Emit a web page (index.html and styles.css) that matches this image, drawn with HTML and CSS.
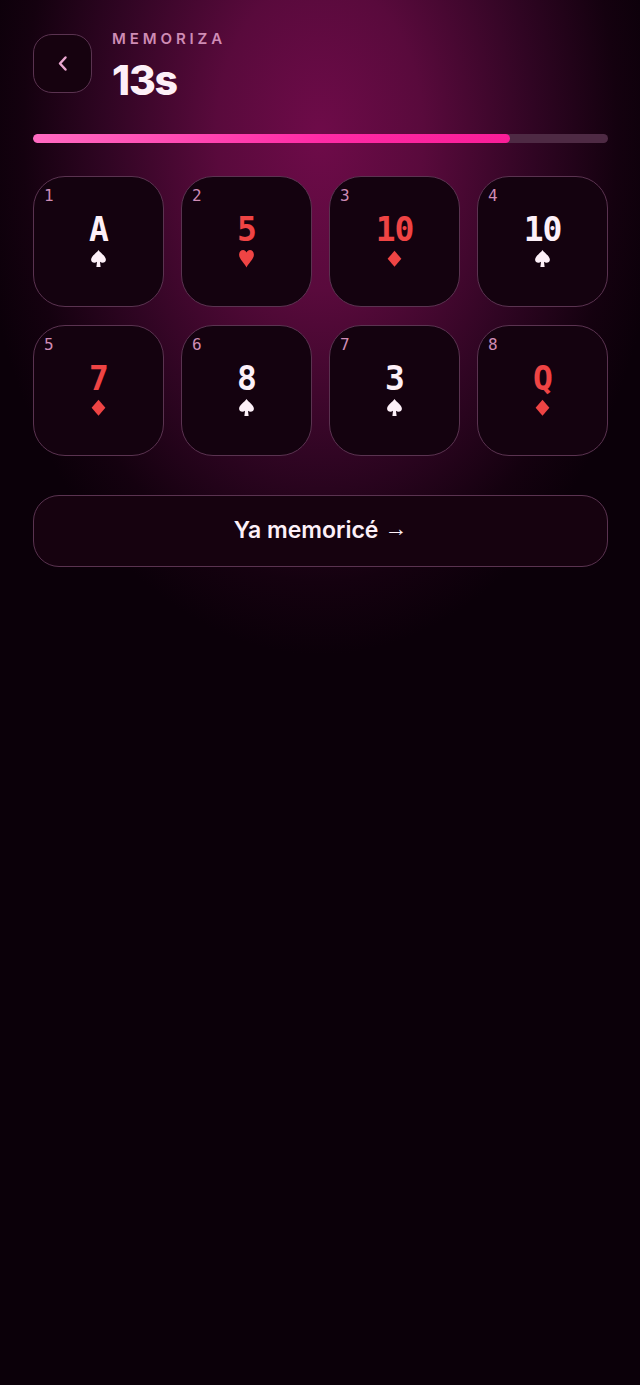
FILE: index.html
```html
<!DOCTYPE html>
<html lang="es">
<head>
    <meta charset="UTF-8">
    <meta name="viewport" content="width=device-width, initial-scale=1.0">
    <title>Memoriza</title>
    <link rel="stylesheet" href="styles.css">
</head>
<body>
    <svg class="defs" width="0" height="0" aria-hidden="true">
        <symbol id="spade" viewBox="0 0 14 17"><path d="M7 0C8.500 2.600 14 5.600 14 9.200c0 2.600-3.200 3.700-5.600 2l.6 4.800H5l.6-4.800c-2.400 1.700-5.600.6-5.600-2C0 5.600 5.500 2.600 7 0z"/></symbol>
        <symbol id="heart" viewBox="0 0 14 17"><path d="M7 16.500C5.500 12.500 0 8.800 0 4.400 0 1.600 1.800 0 3.800 0 5.200 0 6.400.8 7 2.400 7.600.8 8.800 0 10.200 0 12.200 0 14 1.600 14 4.400 14 8.800 8.500 12.500 7 16.500z"/></symbol>
        <symbol id="diamond" viewBox="0 0 14 17"><path d="M7 .8 13.500 8.300 7 15.800.5 8.300z"/></symbol>
    </svg>

    <main class="screen">
        <header class="top">
            <button class="back" type="button" aria-label="Volver">
                <svg width="24" height="24" viewBox="0 0 24 24" fill="none" stroke="currentColor" stroke-width="2.500" stroke-linecap="round" stroke-linejoin="round"><path d="M14.500 5.500 9 11.500l5.500 6"/></svg>
            </button>
            <div class="heading">
                <div class="label">MEMORIZA</div>
                <div class="time">13s</div>
            </div>
        </header>

        <div class="progress"><div class="progress-fill" style="width: 83%"></div></div>

        <section class="cards">
            <div class="card"><span class="num">1</span><span class="rank">A</span><svg class="suit"><use href="#spade"/></svg></div>
            <div class="card red"><span class="num">2</span><span class="rank">5</span><svg class="suit"><use href="#heart"/></svg></div>
            <div class="card red"><span class="num">3</span><span class="rank">10</span><svg class="suit"><use href="#diamond"/></svg></div>
            <div class="card"><span class="num">4</span><span class="rank">10</span><svg class="suit"><use href="#spade"/></svg></div>
            <div class="card red"><span class="num">5</span><span class="rank">7</span><svg class="suit"><use href="#diamond"/></svg></div>
            <div class="card"><span class="num">6</span><span class="rank">8</span><svg class="suit"><use href="#spade"/></svg></div>
            <div class="card"><span class="num">7</span><span class="rank">3</span><svg class="suit"><use href="#spade"/></svg></div>
            <div class="card red"><span class="num">8</span><span class="rank">Q</span><svg class="suit"><use href="#diamond"/></svg></div>
        </section>

        <button class="done" type="button">Ya memoricé <span class="arrow">→</span></button>
    </main>
</body>
</html>
```

FILE: styles.css
```css
* {
    box-sizing: border-box;
}

html, body {
    height: 100%;
}

body {
    margin: 0;
    font-family: Inter, "Noto Sans", sans-serif;
    color: #fdf0f8;
    background-color: #0b0009;
    background-image: radial-gradient(ellipse 345px 520px at 320px 135px, #6e0b49 0%, #590a3c 30%, #300523 62%, #14010f 86%, #0b0009 100%);
    background-repeat: no-repeat;
}

.defs {
    position: absolute;
}

.screen {
    padding: 34px 32px 0 33px;
}

.top {
    display: flex;
    align-items: flex-start;
    gap: 20px;
    height: 59px;
}

.back {
    width: 59px;
    height: 59px;
    padding: 0;
    display: flex;
    align-items: center;
    justify-content: center;
    color: #eaa6d0;
    background: #16020f;
    border: 1.5px solid #5a3350;
    border-radius: 19px;
}

.heading {
    margin-top: -4px;
}

.label {
    font-size: 15px;
    line-height: 18px;
    font-weight: 600;
    letter-spacing: 3.9px;
    color: #cf8cb5;
}

.time {
    margin-top: 9px;
    font-size: 41px;
    line-height: 46px;
    font-weight: 800;
    letter-spacing: -1.2px;
}

.progress {
    height: 9px;
    margin-top: 41px;
    background: #4e2a44;
    border-radius: 5px;
    overflow: hidden;
}

.progress-fill {
    height: 100%;
    background: linear-gradient(90deg, #ff6ac1, #ff2ba6 60%, #f91d98);
    border-radius: 5px;
}

.cards {
    display: grid;
    grid-template-columns: repeat(4, 1fr);
    gap: 18px 17px;
    margin-top: 33px;
}

.card {
    position: relative;
    height: 131px;
    display: flex;
    flex-direction: column;
    align-items: center;
    padding-top: 33px;
    background: #14020f;
    border: 1.5px solid #5a3350;
    border-radius: 32px;
}

.num {
    position: absolute;
    top: 9px;
    left: 10px;
    font-family: "DejaVu Sans Mono", monospace;
    font-size: 16px;
    line-height: 19px;
    color: #cf8cb5;
}

.rank {
    font-family: "DejaVu Sans Mono", "Liberation Mono", monospace;
    font-size: 33px;
    line-height: 40px;
    font-weight: 700;
    letter-spacing: -1px;
    color: #fdf0f8;
}

.suit {
    width: 15px;
    height: 18px;
    fill: #fdf0f8;
}

.red .rank {
    color: #ef4444;
}

.red .suit {
    fill: #ef4444;
}

.done {
    display: block;
    width: 100%;
    height: 72px;
    margin-top: 39px;
    padding: 0 0 3px;
    font-family: Inter, "Noto Sans", sans-serif;
    font-size: 23px;
    font-weight: 600;
    color: #fdf0f8;
    background: #16020f;
    border: 1.5px solid #5a3350;
    border-radius: 26px;
}

.arrow {
    font-family: "Liberation Sans", sans-serif;
    font-weight: 400;
    vertical-align: 2px;
}
```
